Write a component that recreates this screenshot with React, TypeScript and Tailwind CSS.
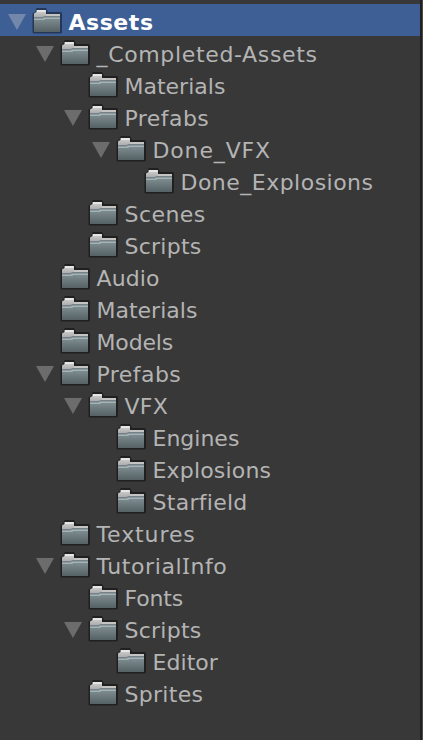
import React from "react";

type Row = { name: string; depth: number; open?: boolean; tracking: string };

const rows: Row[] = [
  { name: "Assets", depth: 0, open: true, tracking: "tracking-[0.55px]" },
  { name: "_Completed-Assets", depth: 1, open: true, tracking: "tracking-[0.65px]" },
  { name: "Materials", depth: 2, tracking: "tracking-[0px]" },
  { name: "Prefabs", depth: 2, open: true, tracking: "tracking-[0.45px]" },
  { name: "Done_VFX", depth: 3, open: true, tracking: "tracking-[0.85px]" },
  { name: "Done_Explosions", depth: 4, tracking: "tracking-[0.48px]" },
  { name: "Scenes", depth: 2, tracking: "tracking-[0.45px]" },
  { name: "Scripts", depth: 2, tracking: "tracking-[0.25px]" },
  { name: "Audio", depth: 1, tracking: "tracking-[0.1px]" },
  { name: "Materials", depth: 1, tracking: "tracking-[0px]" },
  { name: "Models", depth: 1, tracking: "tracking-[-0.15px]" },
  { name: "Prefabs", depth: 1, open: true, tracking: "tracking-[0.45px]" },
  { name: "VFX", depth: 2, open: true, tracking: "tracking-[0.3px]" },
  { name: "Engines", depth: 3, tracking: "tracking-[0px]" },
  { name: "Explosions", depth: 3, tracking: "tracking-[0.18px]" },
  { name: "Starfield", depth: 3, tracking: "tracking-[0.28px]" },
  { name: "Textures", depth: 1, tracking: "tracking-[0.9px]" },
  { name: "TutorialInfo", depth: 1, open: true, tracking: "tracking-[0.62px]" },
  { name: "Fonts", depth: 2, tracking: "tracking-[-0.15px]" },
  { name: "Scripts", depth: 2, open: true, tracking: "tracking-[0.25px]" },
  { name: "Editor", depth: 3, tracking: "tracking-[0.05px]" },
  { name: "Sprites", depth: 2, tracking: "tracking-[0.3px]" },
];

const indents = ["pl-2", "pl-9", "pl-16", "pl-[92px]", "pl-[120px]"];

function Folder() {
  return (
    <svg width="32" height="32" viewBox="0 0 32 32" className="shrink-0">
      <path d="M4.5 4H14L16 8H28.5Q30 8 30 10V28Q30 29.5 28.5 29.5H2Q.5 29.5 .5 28V9.5L3 8Z" fill="#000" fillOpacity=".42" />
      <path d="M4.5 6H14V10H28V14H2V9.5L4.5 8Z" fill="url(#folder-back)" />
      <path d="M5 6H13.5V8H5Z" fill="#e6e6e6" />
      <path d="M14 10H28V12H14Z" fill="#c6c3c3" />
      <path d="M2 14H11L13 12H28V28H2Z" fill="url(#folder-face)" />
      <path d="M2 13H10L13 12H28V14H13L11 15H2Z" fill="#758185" />
      <path d="M2 15.3H12V14.3H28" fill="none" stroke="#a3b4b8" strokeWidth="1.4" />
    </svg>
  );
}

function Label({ text }: { text: string }) {
  const [head, tail] = text.split("I");
  if (tail === undefined) return <>{text}</>;
  return (
    <>
      {head}
      <span className="font-['Noto_Sans',sans-serif] leading-none">I</span>
      {tail}
    </>
  );
}

export default function App() {
  return (
    <div className="flex h-[740px] w-[423px] overflow-hidden bg-[#4a4a4a] font-['DejaVu_Sans',sans-serif] text-[22px] text-[#b4b4b4]">
      <svg width="0" height="0" className="absolute">
        <defs>
          <linearGradient id="folder-face" x1="0" y1="0" x2="0" y2="1">
            <stop offset="0" stopColor="#879599" />
            <stop offset="1" stopColor="#556164" />
          </linearGradient>
          <linearGradient id="folder-back" x1="0" y1="0" x2="0" y2="1">
            <stop offset="0" stopColor="#d2d2d2" />
            <stop offset="1" stopColor="#a8a8a8" />
          </linearGradient>
        </defs>
      </svg>
      <div className="w-[420px] bg-[#383838] pt-1">
        {rows.map((row, i) => (
          <div key={i} className={`flex h-8 items-center ${indents[row.depth]} ${i === 0 ? "bg-[#3e5f96] font-bold text-white" : ""}`}>
            <svg width="18" height="16" viewBox="0 0 18 16" className="mr-1.5 mt-1 shrink-0">
              {row.open && <path d="M0 0H18L9 16Z" fill={i === 0 ? "#7387ab" : "#6c6c6c"} />}
            </svg>
            <Folder />
            <span className={`ml-[4.5px] pt-1.5 whitespace-nowrap leading-8 ${row.tracking}`}>
              <Label text={row.name} />
            </span>
          </div>
        ))}
      </div>
      <div className="w-0.5 bg-[#202020]" />
    </div>
  );
}
